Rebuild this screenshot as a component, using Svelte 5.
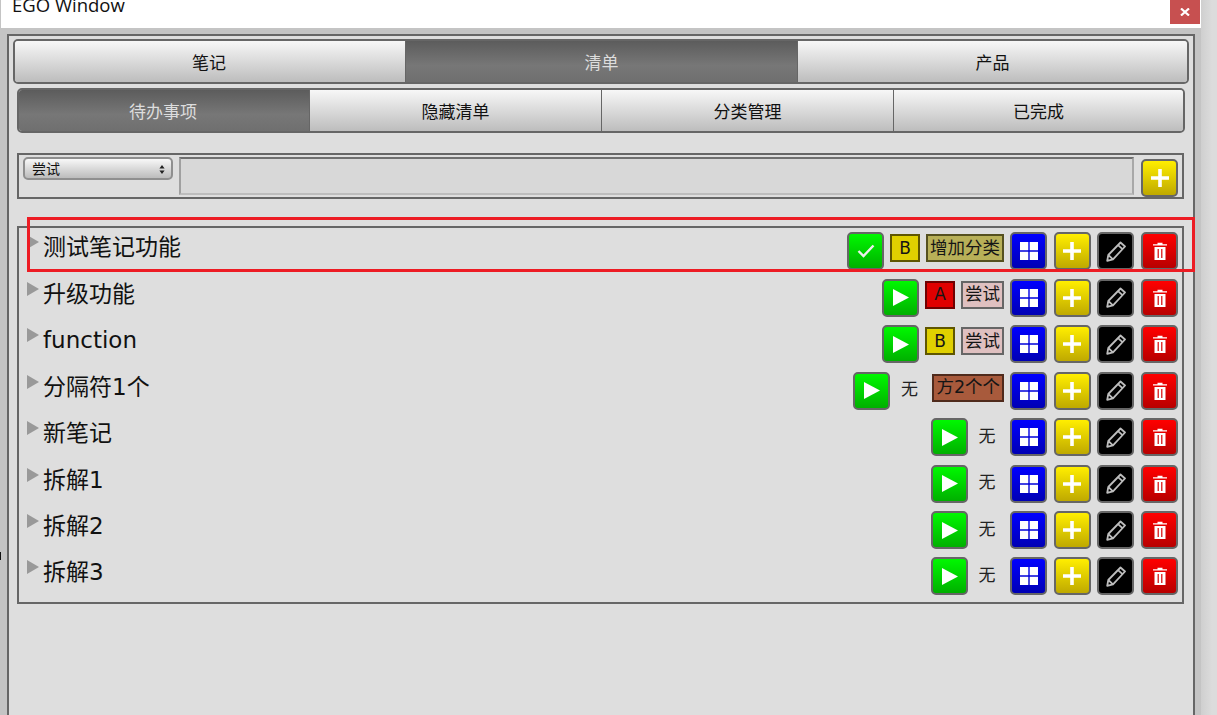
<script>
  const rows = [
    { title: '测试笔记功能', state: 'done', prio: 'B', cat: '增加分类', catKind: 'olive' },
    { title: '升级功能', state: 'play', prio: 'A', cat: '尝试', catKind: 'pink' },
    { title: 'function', state: 'play', prio: 'B', cat: '尝试', catKind: 'pink' },
    { title: '分隔符1个', state: 'play', prio: '', cat: '方2个个', catKind: 'brown' },
    { title: '新笔记', state: 'play', prio: '', cat: '', catKind: '' },
    { title: '拆解1', state: 'play', prio: '', cat: '', catKind: '' },
    { title: '拆解2', state: 'play', prio: '', cat: '', catKind: '' },
    { title: '拆解3', state: 'play', prio: '', cat: '', catKind: '' }
  ];
  const mainTabs = ['笔记', '清单', '产品'];
  const subTabs = ['待办事项', '隐藏清单', '分类管理', '已完成'];
</script>

{#snippet plus()}
  <svg width="18" height="18" viewBox="0 0 18 18"><path d="M9 0v18M0 9h18" stroke="#fff" stroke-width="3.6" fill="none" stroke-linecap="round" /></svg>
{/snippet}

<div class="screen">
  <div class="window">
    <div class="titlebar">
      <span class="wintitle">EGO Window</span>
      <button class="close" aria-label="关闭">
        <svg width="10" height="8" viewBox="0 0 10 8"><path d="M1 0.5l8 7M9 0.5l-8 7" stroke="#fff" stroke-width="2.2" fill="none" /></svg>
      </button>
    </div>
    <div class="body">
      <div class="panel">
        <div class="tabs main">
          {#each mainTabs as t, i}
            <div class="tab" class:active={i === 1}>{t}</div>
          {/each}
        </div>
        <div class="tabs sub">
          {#each subTabs as t, i}
            <div class="tab" class:active={i === 0}>{t}</div>
          {/each}
        </div>

        <div class="addbox">
          <div class="selectwrap">
            <select><option>尝试</option></select>
            <svg class="updown" width="6" height="9" viewBox="0 0 6 9"><path d="M3 0l2.600 3.400H.4zM3 9L.4 5.600h5.200z" fill="#222" /></svg>
          </div>
          <input class="newitem" type="text" />
          <button class="btn yellow addbtn" aria-label="添加">{@render plus()}</button>
        </div>

        <div class="list">
          {#each rows as r}
            <div class="row">
              <svg class="arrow" width="12" height="14" viewBox="0 0 12 14"><path d="M0 0l12 7L0 14z" fill="#999" /></svg>
              <div class="title">{r.title}</div>
              <div class="actions">
                <button class="btn green first" aria-label="状态">
                  {#if r.state === 'done'}
                    <svg width="18" height="14" viewBox="0 0 18 14"><path d="M1.500 7l5 5L16.500 1.500" stroke="#eee" stroke-width="2.400" fill="none" /></svg>
                  {:else}
                    <svg width="16" height="17" viewBox="0 0 16 17"><path d="M0 0l16 8.500L0 17z" fill="#fff" /></svg>
                  {/if}
                </button>
                {#if r.prio}
                  <span class="badge prio {r.prio === 'A' ? 'prioa' : 'priob'}">{r.prio}</span>
                {:else}
                  <span class="none">无</span>
                {/if}
                {#if r.cat}
                  <span class="badge cat {r.catKind}">{r.cat}</span>
                {/if}
                <button class="btn blue tools" aria-label="分类">
                  <svg width="18" height="18" viewBox="0 0 18 18"><path d="M0 0h8.300v8.300H0zM9.700 0H18v8.300H9.700zM0 9.700h8.300V18H0zM9.700 9.700H18V18H9.700z" fill="#fff" /></svg>
                </button>
                <button class="btn yellow" aria-label="添加">{@render plus()}</button>
                <button class="btn black" aria-label="编辑">
                  <svg width="20" height="21" viewBox="0 0 20 21"><path d="M14.500 1.500l4.500 4L7 18.300 1.200 19.800 2.300 14zM12 4.200l4.500 4M2.300 14l4.700 4.300" stroke="#bdbdbd" stroke-width="1.800" fill="none" stroke-linejoin="round" /></svg>
                </button>
                <button class="btn red" aria-label="删除">
                  <svg width="14" height="18" viewBox="0 0 14 18"><path fill-rule="evenodd" d="M0 2.200h4.500V.8h5v1.400H14v1.400H0zM1.500 5H12.500V18H1.500zM4.600 7v9h1.200V7zM8.200 7v9h1.200V7z" fill="#fff" /></svg>
                </button>
              </div>
            </div>
          {/each}
        </div>
      </div>
    </div>
  </div>
  <div class="desk"></div>
  <div class="edgemark"></div>
  <div class="highlight"></div>
</div>

<style>
  :global(body) {
    margin: 0;
    background: #dcdcdc;
  }
  .screen {
    position: relative;
    display: flex;
    width: 1217px;
    height: 715px;
    overflow: hidden;
    font-family: "DejaVu Sans", "Noto Sans CJK SC", sans-serif;
    color: #111;
  }
  .window {
    width: 1201px;
    flex: none;
    display: flex;
    flex-direction: column;
    background: #c4c4c4;
  }
  .desk {
    flex: 1;
    background: linear-gradient(to right, #cfcfcf, #dcdcdc 70%);
  }
  .titlebar {
    height: 28px;
    flex: none;
    margin-left: 1px;
    background: #fff;
    position: relative;
    overflow: hidden;
  }
  .wintitle {
    display: block;
    font-family: "Open Sans", "Noto Sans", sans-serif;
    font-size: 18.500px;
    line-height: 20px;
    margin: -5px 0 0 11px;
    color: #111;
  }
  .close {
    position: absolute;
    top: 0;
    right: 1px;
    width: 30px;
    height: 24px;
    padding: 0;
    border: 0;
    background: #c75050;
    display: flex;
    align-items: center;
    justify-content: center;
  }
  .body {
    flex: 1;
    padding: 6px 6px 0 7px;
    min-height: 0;
  }
  .panel {
    height: 100%;
    box-sizing: border-box;
    border: 2px solid #666;
    border-bottom: 0;
    background: #dedede;
    padding: 3px 4px 0;
  }
  .tabs {
    display: grid;
    height: 45px;
    box-sizing: border-box;
    border: 2px solid #666;
    border-radius: 5px;
    overflow: hidden;
  }
  .tabs.main {
    grid-template-columns: 390px 392px 1fr;
  }
  .tabs.sub {
    margin: 4px 4px 0;
    grid-template-columns: 290px 292px 292px 1fr;
  }
  .tab {
    display: flex;
    align-items: center;
    justify-content: center;
    font-size: 17px;
    color: #111;
    background: linear-gradient(to bottom, #f7f7f7, #bdbdbd);
    border-left: 1px solid #666;
  }
  .tab:first-child {
    border-left: 0;
    padding-right: 2px;
  }
  .tab.active {
    color: #ddd;
    background: linear-gradient(to bottom, #5c5c5c, #777 60%, #6f6f6f);
  }
  .addbox {
    margin: 20px 5px 0 4px;
    height: 46px;
    box-sizing: border-box;
    border: 2px solid #666;
    padding: 2px 4px 0 4px;
    display: flex;
    align-items: flex-start;
  }
  .selectwrap {
    position: relative;
    flex: none;
    width: 150px;
    height: 23px;
    margin-right: 6px;
  }
  select {
    appearance: none;
    width: 100%;
    height: 100%;
    box-sizing: border-box;
    border: 2px solid #8f8f8f;
    border-radius: 5px;
    padding: 0 0 0 7px;
    background: linear-gradient(to bottom, #f8f8f8, #bcbcbc);
    font-family: inherit;
    font-size: 14px;
    color: #111;
  }
  .updown {
    position: absolute;
    right: 8px;
    top: 8px;
  }
  .newitem {
    flex: 1;
    min-width: 0;
    height: 38px;
    box-sizing: border-box;
    padding: 0;
    background: #d8d8d8;
    border-style: solid;
    border-width: 2px;
    border-color: #6f6f6f #a8a8a8 #bdbdbd #a0a0a0;
    outline: 0;
  }
  .addbtn {
    margin: 2px 0 0 7px;
  }
  .btn {
    flex: none;
    width: 37px;
    height: 38px;
    box-sizing: border-box;
    padding: 0;
    border: 2px solid #666;
    border-radius: 5px;
    display: flex;
    align-items: center;
    justify-content: center;
  }
  .green { background: linear-gradient(to bottom, #00f800, #00b000); }
  .blue { background: linear-gradient(to bottom, #0000ff, #0000b4); }
  .yellow { background: linear-gradient(to bottom, #ffee00, #bfa900); }
  .black { background: #000; }
  .red { background: linear-gradient(to bottom, #ff0000, #b80000); }
  .list {
    margin: 27px 5px 0 4px;
    height: 378px;
    box-sizing: border-box;
    border: 2px solid #666;
    padding: 4.400px 4px 0 8px;
  }
  .row {
    height: 46.450px;
    display: flex;
    align-items: flex-start;
  }
  .arrow {
    flex: none;
    margin-top: 3px;
  }
  .title {
    margin-left: 4px;
    font-size: 23px;
    line-height: 30px;
    height: 30px;
    color: #111;
    white-space: nowrap;
  }
  .actions {
    margin-left: auto;
    display: flex;
    align-items: flex-start;
  }
  .first {
    margin-right: 6px;
  }
  .badge {
    box-sizing: border-box;
    height: 28px;
    margin-top: 2px;
    border: 2px solid #666;
    display: flex;
    align-items: center;
    justify-content: center;
    font-size: 17.500px;
    line-height: 1;
    color: #151515;
  }
  .prio {
    width: 30px;
    margin-right: 6px;
    font-size: 17px;
  }
  .priob { background: #e0d000; border-color: #5f5600; }
  .prioa { background: #e00000; border-color: #700000; }
  .cat {
    padding: 0 2px;
  }
  .olive { background: #b8b058; border-color: #55501f; }
  .pink { background: #dfc0c0; border-color: #666; }
  .brown { background: #a85a3c; border-color: #4f2a1c; }
  .none {
    width: 18px;
    height: 32px;
    display: flex;
    align-items: center;
    justify-content: center;
    font-size: 17px;
    margin: 0 14px 0 4px;
    color: #222;
  }
  .tools {
    margin-left: 6px;
  }
  .none + .tools { margin-left: 0; }
  .actions .btn + .btn { margin-left: 6.670px; }
  .actions .none + .btn.tools { margin-left: 0; }
  .edgemark {
    position: absolute;
    left: 0;
    top: 552px;
    width: 1px;
    height: 8px;
    background: #111;
  }
  .highlight {
    position: absolute;
    left: 27px;
    top: 217px;
    width: 1168px;
    height: 55px;
    box-sizing: border-box;
    border: 3px solid #ed1c24;
    pointer-events: none;
  }
</style>
